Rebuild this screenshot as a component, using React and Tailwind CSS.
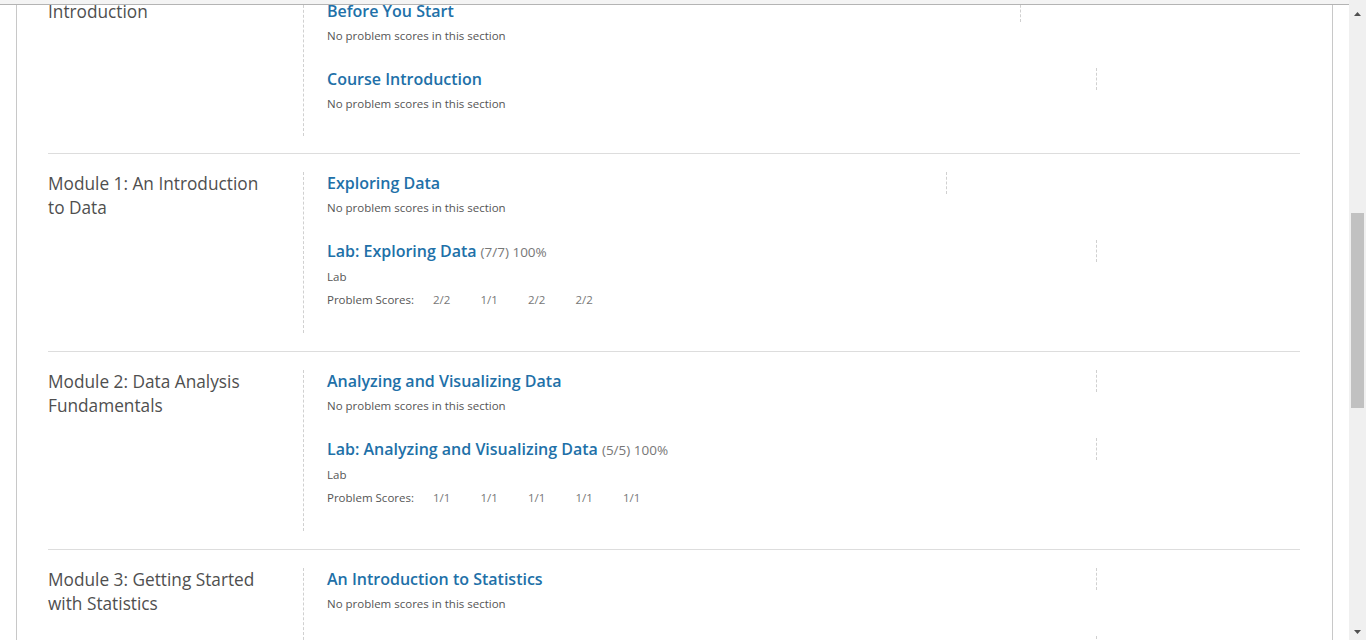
import React from 'react';

const modules = [
  {
    title: 'Introduction',
    sections: [
      { name: 'Before You Start', marker: 'w-[280px]' },
      { name: 'Course Introduction', marker: 'w-[204px]' },
    ],
  },
  {
    title: 'Module 1: An Introduction to Data',
    sections: [
      { name: 'Exploring Data', marker: 'w-[354px]' },
      {
        name: 'Lab: Exploring Data',
        score: '(7/7) 100%',
        kind: 'Lab',
        scores: ['2/2', '1/1', '2/2', '2/2'],
        marker: 'w-[204px]',
      },
    ],
  },
  {
    title: 'Module 2: Data Analysis Fundamentals',
    sections: [
      { name: 'Analyzing and Visualizing Data', marker: 'w-[204px]' },
      {
        name: 'Lab: Analyzing and Visualizing Data',
        score: '(5/5) 100%',
        kind: 'Lab',
        scores: ['1/1', '1/1', '1/1', '1/1', '1/1'],
        marker: 'w-[204px]',
      },
    ],
  },
  {
    title: 'Module 3: Getting Started with Statistics',
    sections: [
      { name: 'An Introduction to Statistics', marker: 'w-[204px]' },
      { name: 'Lab: Getting Started with Statistics', marker: 'w-[204px]' },
    ],
  },
];

const Section = ({ section }) => (
  <div className="pb-[24px]">
    <div className="flex h-[22px]">
      <div className="flex-1 whitespace-nowrap text-[16px] leading-[22px] font-semibold text-[#2170a8]">
        {section.name}
        {section.score && (
          <span className="ml-[4px] text-[13.5px] font-normal text-[#777]">{section.score}</span>
        )}
      </div>
      <div className={`${section.marker} h-[22px] border-l border-dashed border-[#d0d0d0]`} />
    </div>
    {section.kind ? (
      <>
        <div className="mt-[7px] text-[11.5px] leading-[16px] text-[#555]">{section.kind}</div>
        <div className="mt-[6px] flex text-[11.5px] leading-[18px]">
          <span className="w-[106px] text-[#555]">Problem Scores:</span>
          {section.scores.map((s, i) => (
            <span key={i} className="w-[47.5px] text-[#777]">{s}</span>
          ))}
        </div>
      </>
    ) : (
      <div className="mt-[6px] text-[11.5px] leading-[16px] text-[#555]">
        No problem scores in this section
      </div>
    )}
  </div>
);

const Scrollbar = () => (
  <div className="w-[17px] shrink-0 flex flex-col bg-[#f0f0f0] pt-[5px]">
    <div className="h-[17px] flex items-center justify-center">
      <svg width="7" height="4" viewBox="0 0 7 4"><path d="M3.5 0 L7 4 L0 4 Z" fill="#505050" /></svg>
    </div>
    <div className="flex-1">
      <div className="mt-[191px] mx-[2px] h-[195px] bg-[#c1c1c1]" />
    </div>
    <div className="h-[17px] flex items-center justify-center">
      <svg width="7" height="4" viewBox="0 0 7 4"><path d="M0 0 L7 0 L3.5 4 Z" fill="#505050" /></svg>
    </div>
  </div>
);

export default function App() {
  return (
    <div className="h-[640px] w-full flex overflow-hidden bg-white font-['Open_Sans',sans-serif]">
      <div className="flex-1 min-w-0 flex flex-col">
        <div className="h-[5px] shrink-0 bg-[#f4f4f4] border-b border-[#b4b4b4]" />
        <div className="flex-1 overflow-hidden px-4">
          <div className="-mt-[23px] border-x border-[#c8c8c8] pl-[31px] pr-[32px]">
            {modules.map((m, i) => (
              <div
                key={i}
                className={`flex pt-[18px] ${i > 0 ? 'pb-[18px] border-t border-[#dddddd]' : 'pb-[17px]'}`}
              >
                <div className="w-[255px] shrink-0 pr-[30px] text-[17.25px] leading-[24px] text-[#4f4f4f]">
                  {m.title}
                </div>
                <div className="flex-1 border-l border-dashed border-[#d0d0d0] pl-[23px]">
                  {m.sections.map((s, j) => (
                    <Section key={j} section={s} />
                  ))}
                </div>
              </div>
            ))}
          </div>
        </div>
      </div>
      <Scrollbar />
    </div>
  );
}
